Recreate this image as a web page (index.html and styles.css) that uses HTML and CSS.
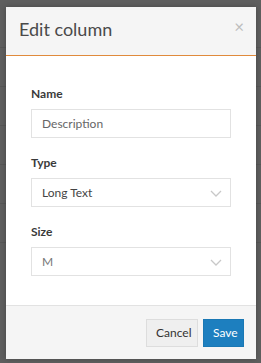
FILE: index.html
```
<!DOCTYPE html>
<html>
<head>
<meta charset="utf-8">
<link rel="stylesheet" href="styles.css">
</head>
<body>
<div class="backdrop">
  <div class="bg-lines">
    <div class="bg-row"></div>
    <div class="bg-row"></div>
    <div class="bg-row"></div>
    <div class="bg-row"></div>
    <div class="bg-row"></div>
    <div class="bg-row"></div>
  </div>
  <div class="modal">
    <div class="modal-header">
      <h2 class="modal-title">Edit column</h2>
      <span class="close">×</span>
    </div>
    <div class="modal-body">
      <div class="field">
        <label class="label">Name</label>
        <div class="input">Description</div>
      </div>
      <div class="field">
        <label class="label">Type</label>
        <div class="input select"><span class="val dark">Long Text</span>
          <svg class="chev" width="12" height="7" viewBox="0 0 12 7"><path d="M1 1l5 5 5-5" fill="none" stroke="#c8c8c8" stroke-width="1.3"/></svg>
        </div>
      </div>
      <div class="field">
        <label class="label">Size</label>
        <div class="input select"><span class="val">M</span>
          <svg class="chev" width="12" height="7" viewBox="0 0 12 7"><path d="M1 1l5 5 5-5" fill="none" stroke="#c8c8c8" stroke-width="1.3"/></svg>
        </div>
      </div>
    </div>
    <div class="modal-footer">
      <button class="btn btn-cancel">Cancel</button>
      <button class="btn btn-save">Save</button>
    </div>
  </div>
</div>
</body>
</html>
```
FILE: styles.css
```
* { box-sizing: border-box; }
html, body { margin: 0; padding: 0; }
body {
  width: 261px;
  height: 363px;
  overflow: hidden;
  font-family: Lato, "Open Sans", sans-serif;
  background: #5e5e5e;
}
.backdrop {
  position: relative;
  width: 261px;
  height: 363px;
  background: #5f5f5f;
  padding: 7px 5px 4px 6px;
}
.bg-lines {
  position: absolute;
  inset: 0;
  display: flex;
  flex-direction: column;
  padding-top: 47px;
  gap: 38px;
}
.bg-row {
  height: 1px;
  background: #575757;
}
.modal {
  position: relative;
  height: 352px;
  background: #fff;
  display: flex;
  flex-direction: column;
  box-shadow: 0 0 6px rgba(0,0,0,0.25);
}
.modal-header {
  height: 49px;
  background: #f5f5f5;
  border-bottom: 1px solid #e08a3c;
  display: flex;
  align-items: center;
  justify-content: space-between;
  padding: 0 12px 4px 13px;
}
.modal-title {
  margin: 0;
  font-size: 18px;
  font-weight: 400;
  color: #4a4a4a;
  letter-spacing: 0;
}
.close {
  font-size: 17px;
  color: #bdbdbd;
  line-height: 1;
  margin-top: -6px;
}
.modal-body {
  flex: 1;
  padding: 32px 25px 0 25px;
  display: flex;
  flex-direction: column;
  gap: 19px;
}
.field {
  display: flex;
  flex-direction: column;
}
.label {
  font-size: 12px;
  font-weight: 700;
  color: #3a3a3a;
  margin-bottom: 9px;
  line-height: 12px;
}
.input {
  height: 29px;
  border: 1px solid #e2e2e2;
  background: #fff;
  font-size: 12px;
  color: #666;
  padding: 0 10px;
  display: flex;
  align-items: center;
}
.select {
  justify-content: space-between;
  padding: 0 8px 0 10px;
}
.val { color: #777; }
.val.dark { color: #444; }
.chev { margin-top: 1px; }
.modal-footer {
  height: 54px;
  background: #f5f5f5;
  border-top: 1px solid #e2e2e2;
  display: flex;
  justify-content: flex-end;
  align-items: center;
  gap: 5px;
  padding: 0 12px 0 0;
}
.btn {
  font-family: Lato, "Open Sans", sans-serif;
  font-size: 12px;
  height: 28px;
  padding: 0 9px;
  border: 1px solid #ddd;
  cursor: pointer;
}
.btn-cancel {
  background: #efefef;
  color: #333;
  width: 52px;
}
.btn-save {
  background: #1d7fbf;
  border-color: #1a78b4;
  color: #fff;
  width: 41px;
}
```
